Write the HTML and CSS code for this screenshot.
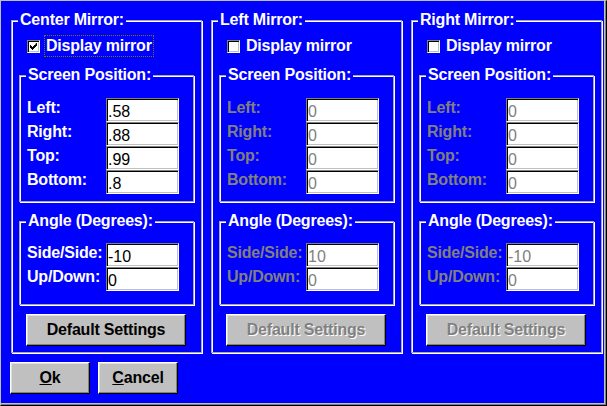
FILE: index.html
```html
<!DOCTYPE html>
<html>
<head>
<meta charset="utf-8">
<title>Mirror Settings</title>
<link rel="stylesheet" href="styles.css">
</head>
<body>
<div class="window">
  <div class="groups">
    <fieldset class="group">
      <legend>Center Mirror:</legend>
      <div class="check-row">
        <span class="checkbox"><svg width="7" height="7" viewBox="0 0 7 7"><path d="M6 0h1v3h-1v1h-1v1h-1v1h-1v1h-1v-1h-1v-1h-1v-3h1v1h1v1h1v-1h1v-1h1z" fill="#000"/></svg></span>
        <span class="check-label focused">Display mirror</span>
      </div>
      <fieldset class="sub pos">
        <legend>Screen Position:</legend>
        <div class="row first"><span class="lbl">Left:</span><span class="field">.58</span></div>
        <div class="row"><span class="lbl">Right:</span><span class="field">.88</span></div>
        <div class="row"><span class="lbl">Top:</span><span class="field">.99</span></div>
        <div class="row"><span class="lbl">Bottom:</span><span class="field">.8</span></div>
      </fieldset>
      <fieldset class="sub angle">
        <legend>Angle (Degrees):</legend>
        <div class="row first"><span class="lbl">Side/Side:</span><span class="field">-10</span></div>
        <div class="row"><span class="lbl">Up/Down:</span><span class="field">0</span></div>
      </fieldset>
      <button class="btn wide" type="button">Default Settings</button>
    </fieldset>

    <fieldset class="group disabled">
      <legend>Left Mirror:</legend>
      <div class="check-row">
        <span class="checkbox"></span>
        <span class="check-label">Display mirror</span>
      </div>
      <fieldset class="sub pos">
        <legend>Screen Position:</legend>
        <div class="row first"><span class="lbl">Left:</span><span class="field">0</span></div>
        <div class="row"><span class="lbl">Right:</span><span class="field">0</span></div>
        <div class="row"><span class="lbl">Top:</span><span class="field">0</span></div>
        <div class="row"><span class="lbl">Bottom:</span><span class="field">0</span></div>
      </fieldset>
      <fieldset class="sub angle">
        <legend>Angle (Degrees):</legend>
        <div class="row first"><span class="lbl">Side/Side:</span><span class="field">10</span></div>
        <div class="row"><span class="lbl">Up/Down:</span><span class="field">0</span></div>
      </fieldset>
      <button class="btn wide" type="button" disabled>Default Settings</button>
    </fieldset>

    <fieldset class="group disabled">
      <legend>Right Mirror:</legend>
      <div class="check-row">
        <span class="checkbox"></span>
        <span class="check-label">Display mirror</span>
      </div>
      <fieldset class="sub pos">
        <legend>Screen Position:</legend>
        <div class="row first"><span class="lbl">Left:</span><span class="field">0</span></div>
        <div class="row"><span class="lbl">Right:</span><span class="field">0</span></div>
        <div class="row"><span class="lbl">Top:</span><span class="field">0</span></div>
        <div class="row"><span class="lbl">Bottom:</span><span class="field">0</span></div>
      </fieldset>
      <fieldset class="sub angle">
        <legend>Angle (Degrees):</legend>
        <div class="row first"><span class="lbl">Side/Side:</span><span class="field">-10</span></div>
        <div class="row"><span class="lbl">Up/Down:</span><span class="field">0</span></div>
      </fieldset>
      <button class="btn wide" type="button" disabled>Default Settings</button>
    </fieldset>
  </div>
  <div class="actions">
    <button class="btn small" type="button"><u>O</u>k</button>
    <button class="btn small" type="button"><u>C</u>ancel</button>
  </div>
</div>
</body>
</html>
```
FILE: styles.css
```css
* {
  box-sizing: border-box;
}

html,
body {
  margin: 0;
  padding: 0;
  background: #000;
}

body {
  font-family: "Liberation Sans", Arial, sans-serif;
  font-size: 16px;
  letter-spacing: -0.2px;
}

.window {
  width: 607px;
  height: 406px;
  background: #0000ff;
  border: 1px solid;
  border-color: #c0c0c0 #000 #000 #c0c0c0;
  box-shadow: inset -1px -1px 0 #808080, inset -2px -2px 0 #c0c0c0;
  padding: 10px 0 0 9px;
}

.groups {
  display: flex;
  gap: 9px;
  padding-left: 1px;
}

fieldset {
  margin: 0;
  min-width: 0;
  border: 1px solid #a8a8a8;
  box-shadow: inset 1px 1px 0 #fff, 1px 1px 0 #fff;
}

legend {
  padding: 0 2px;
  line-height: 18px;
  font-weight: bold;
  color: #fff;
  background: #0000ff;
}

.group {
  width: 191px;
  padding: 0 6px 6px;
}

.check-row {
  display: flex;
  align-items: center;
  height: 22px;
  margin: 6px 0 0 9px;
}

.checkbox {
  width: 13px;
  height: 13px;
  background: #fff;
  border: 1px solid;
  border-color: #808080 #fff #fff #808080;
  box-shadow: inset 1px 1px 0 #000, inset -1px -1px 0 #c0c0c0;
  display: flex;
  align-items: center;
  justify-content: center;
}

.checkbox svg {
  display: block;
}

.check-label {
  margin-left: 4px;
  padding: 1px;
  border: 1px dotted transparent;
  line-height: 18px;
  font-weight: bold;
  color: #fff;
  white-space: nowrap;
}

.check-label.focused {
  border-color: #7a7a00;
}

.sub {
  width: 175px;
  margin: 9px 0 0 1px;
  padding: 0 6px 7px;
}

.sub.angle {
  margin-top: 10px;
  padding-bottom: 13px;
}

.row {
  display: flex;
  height: 24px;
}

.pos .row.first {
  margin-top: 14px;
}

.angle .row.first {
  margin-top: 13px;
}

.lbl {
  width: 80px;
  padding-left: 1px;
  line-height: 20px;
  font-weight: bold;
  color: #fff;
  white-space: nowrap;
}

.field {
  width: 73px;
  height: 24px;
  background: #fff;
  border: 1px solid;
  border-color: #808080 #fff #fff #808080;
  box-shadow: inset 1px 1px 0 #000, inset -1px -1px 0 #c0c0c0;
  padding: 4px 0 0 1px;
  font-size: 16px;
  letter-spacing: 0;
  line-height: 18px;
  color: #000;
}

.disabled .lbl,
.disabled .field {
  color: #808080;
}

.btn {
  display: block;
  height: 32px;
  padding: 0;
  margin: 0;
  background: #c0c0c0;
  border: 1px solid;
  border-color: #fff #000 #000 #fff;
  box-shadow: inset -1px -1px 0 #808080, inset 1px 1px 0 #dfdfdf;
  font-family: inherit;
  font-size: 16px;
  letter-spacing: -0.2px;
  font-weight: bold;
  line-height: 18px;
  color: #000;
}

.btn:disabled {
  color: #808080;
  text-shadow: 1px 1px 0 #fff;
}

.btn.wide {
  width: 160px;
  margin: 9px 0 0 8px;
}

.actions {
  display: flex;
  gap: 8px;
  margin-top: 9px;
}

.btn.small {
  width: 80px;
}
```
